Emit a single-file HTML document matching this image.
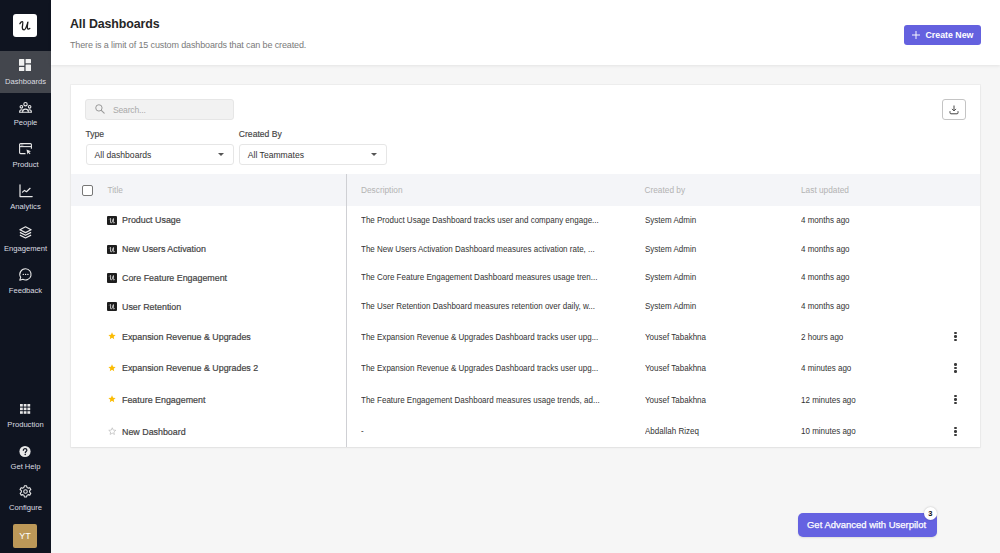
<!DOCTYPE html>
<html><head><meta charset="utf-8">
<style>
*{box-sizing:border-box;margin:0;padding:0}
html,body{width:1000px;height:553px;overflow:hidden;background:#f6f6f6;font-family:"Liberation Sans",sans-serif;color:#333}
.t{position:absolute;white-space:nowrap;line-height:1}
#side{position:absolute;left:0;top:0;width:51px;height:553px;background:#0f1420}
#logo{position:absolute;left:13.3px;top:13.9px;width:23.6px;height:23px;background:#fff;border-radius:3px}
.nav{position:absolute;left:0;width:51px;height:42px;color:#dcdde0;font-size:7.6px}
.nav.active{background:#43464d}
.nav svg{position:absolute;left:19px;top:8px;overflow:visible}
.nav .l{position:absolute;left:0;width:51px;text-align:center;top:26px;white-space:nowrap;line-height:1}
#header{position:absolute;left:51px;top:0;width:949px;height:65px;background:#fff;box-shadow:0 1px 3px rgba(0,0,0,.08)}
#title{left:70px;top:18px;font-size:12.4px;font-weight:bold;color:#262626;letter-spacing:-0.1px}
#sub{left:70px;top:40.5px;font-size:9px;color:#7a7a7a;letter-spacing:-0.13px}
#create{position:absolute;left:904px;top:25px;width:77px;height:20px;background:#6461df;border-radius:3px}
#create .t{left:21.5px;top:6px;font-size:8.8px;font-weight:bold;color:#fff}
#card{position:absolute;left:71px;top:85px;width:909px;height:362px;background:#fff;box-shadow:0 0 0 1px rgba(0,0,0,.03),0 1px 2px rgba(0,0,0,.06)}
#search{position:absolute;left:85px;top:99px;width:149px;height:21px;background:#f2f2f2;border:1px solid #e6e6e6;border-radius:3px}
.lbl{font-size:8.6px;color:#444;-webkit-text-stroke:0.15px #444}
.dd{position:absolute;top:143.5px;width:148px;height:21px;background:#fff;border:1px solid #e6e6e6;border-radius:3px}
.dd .t{left:8px;top:6px;font-size:8.6px;color:#333}
.dd .arr{position:absolute;right:9px;top:8px;width:0;height:0;border-left:3px solid transparent;border-right:3px solid transparent;border-top:3.5px solid #555}
#dl{position:absolute;left:942px;top:99px;width:24px;height:21px;border:1px solid #c4c4c4;border-radius:3px;background:#fff}
#thead{position:absolute;left:71px;top:174px;width:909px;height:32px;background:#f4f5f8}
#vline{position:absolute;left:346px;top:174px;width:1px;height:273px;background:#cfd0d4}
#chk{position:absolute;left:82px;top:185px;width:11px;height:11px;border:1.3px solid #777;border-radius:2px;background:#fff}
.th{font-size:8.3px;color:#b3b3b3;top:186px}
.ti{font-size:8.9px;color:#444;left:122px;-webkit-text-stroke:0.2px #444}
.de{font-size:9px;color:#333;left:361px;transform:scaleX(.89);transform-origin:0 0}
.cb{font-size:9px;color:#333;left:644.5px;transform:scaleX(.89);transform-origin:0 0}
.lu{font-size:9px;color:#333;left:801px;transform:scaleX(.89);transform-origin:0 0}
.ic{position:absolute;left:107px;width:10px;height:9.5px;background:#1e1e1e;border-radius:1px}
.kb{position:absolute;left:954.1px;width:2.6px;height:10px}
.kb i{position:absolute;left:0;width:2.6px;height:2.6px;border-radius:50%;background:#3a3a3a}
#adv{position:absolute;left:798px;top:513px;width:139px;height:24px;background:#6562e1;border-radius:5px;box-shadow:0 1px 2px rgba(0,0,0,.1)}
#adv .t{left:9.3px;top:7.4px;font-size:9.9px;color:#fff;transform:scaleX(.96);transform-origin:0 0;-webkit-text-stroke:0.25px #fff}
#badge{position:absolute;left:923.5px;top:506.5px;width:13.5px;height:13.5px;border-radius:50%;background:#fff;box-shadow:0 0 2px rgba(0,0,0,.25)}
#badge .t{left:0;width:13.5px;text-align:center;top:3px;font-size:7.5px;font-weight:bold;color:#111}
#yt{position:absolute;left:13px;top:524px;width:24px;height:24px;background:#bc9858;border-radius:2px}
#yt .t{left:0;width:24px;text-align:center;top:7.6px;font-size:9px;color:#fff}
</style></head><body>
<div id="side">
  <div id="logo"><svg width="24" height="24" viewBox="0 0 24 24" style="position:absolute;left:0;top:0"><path d="M6.9 9.7C7.6 8.5 9.1 7.5 9.7 7.8C10.3 8.2 9.2 12.4 9.3 13.9C9.4 15.3 10.2 15.9 11.1 15.9C12.6 15.8 14.1 10.6 14.9 8.2C14.6 10 14.1 13.2 14.4 14.3C14.7 15.3 15.9 15.2 16.8 14.5" fill="none" stroke="#1b1b1b" stroke-width="1.3" stroke-linecap="round" stroke-linejoin="round"/></svg></div>
  <div class="nav active" style="top:51px"><svg width="12" height="12" viewBox="0 0 12 12" style="top:8px"><rect x="0" y="0" width="5.3" height="6.8" rx=".6" fill="#f0f0f0"/><rect x="6.6" y="0" width="5.4" height="4.3" rx=".6" fill="#f0f0f0"/><rect x="0" y="8" width="5.3" height="4" rx=".6" fill="#f0f0f0"/><rect x="6.6" y="5.5" width="5.4" height="6.5" rx=".6" fill="#f0f0f0"/></svg><div class="l" style="top:27px">Dashboards</div></div>
  <div class="nav" style="top:93px"><svg width="13" height="11" viewBox="0 0 13 11" style="top:9px"><g fill="none" stroke="#e8e8e8" stroke-width="1.1"><circle cx="6.5" cy="2.2" r="1.7"/><circle cx="2.4" cy="4.8" r="1.3"/><circle cx="10.6" cy="4.8" r="1.3"/><path d="M3.6 10.3c0-1.8 1.3-3.2 2.9-3.2s2.9 1.4 2.9 3.2z"/><path d="M3.6 10.3H.6c0-1.5.8-2.6 1.8-2.6.6 0 1 .2 1.4.6M9.4 10.3h3c0-1.5-.8-2.6-1.8-2.6-.6 0-1 .2-1.4.6"/></g></svg><div class="l">People</div></div>
  <div class="nav" style="top:135px"><svg width="13" height="12" viewBox="0 0 13 12" style="top:8px"><g fill="none" stroke="#e8e8e8" stroke-width="1.1"><path d="M6.5 10.6H1.6a1 1 0 0 1-1-1V1.6a1 1 0 0 1 1-1h9.8a1 1 0 0 1 1 1v4.2"/><path d="M.6 3.6h11.8"/></g><path d="M7.5 6.6l4.5 1.6-1.9.8 1.4 1.5-.8.7-1.4-1.5-.8 1.9z" fill="#e8e8e8"/><circle cx="2.3" cy="2.1" r=".5" fill="#e8e8e8"/><circle cx="3.8" cy="2.1" r=".5" fill="#e8e8e8"/></svg><div class="l">Product</div></div>
  <div class="nav" style="top:177px"><svg width="14" height="14" viewBox="0 0 14 14" style="top:6.5px;left:18.5px"><g fill="none" stroke="#e8e8e8" stroke-width="1.2" stroke-linecap="round" stroke-linejoin="round"><path d="M1 .8V12.6h12.2"/><path d="M3.5 8.1l2-1.7 2 1.3 3.6-3.4"/></g></svg><div class="l">Analytics</div></div>
  <div class="nav" style="top:219px"><svg width="13" height="13" viewBox="0 0 13 13" style="top:6.5px"><g fill="none" stroke="#e8e8e8" stroke-width="1.2" stroke-linejoin="round"><path d="M6.5.8l5.6 2.9-5.6 2.9L.9 3.7z"/><path d="M.9 6.4l5.6 2.9 5.6-2.9M.9 9.1l5.6 2.9 5.6-2.9"/></g></svg><div class="l">Engagement</div></div>
  <div class="nav" style="top:261px"><svg width="13" height="13" viewBox="0 0 13 13" style="top:6.5px"><path d="M6.6.8a5.6 5.6 0 1 1-2.8 10.5L.8 12.2l.9-2.8A5.6 5.6 0 0 1 6.6.8z" fill="none" stroke="#e8e8e8" stroke-width="1.1" stroke-linejoin="round"/><circle cx="4.3" cy="6.4" r=".7" fill="#e8e8e8"/><circle cx="6.6" cy="6.4" r=".7" fill="#e8e8e8"/><circle cx="8.9" cy="6.4" r=".7" fill="#e8e8e8"/></svg><div class="l">Feedback</div></div>
  <div class="nav" style="top:395px"><svg width="11" height="10" viewBox="0 0 11 10" style="top:9px;left:20px"><g fill="#e8e8e8"><rect x="0" y="0" width="2.8" height="2.6"/><rect x="3.7" y="0" width="2.8" height="2.6"/><rect x="7.4" y="0" width="2.8" height="2.6"/><rect x="0" y="3.6" width="2.8" height="2.6"/><rect x="3.7" y="3.6" width="2.8" height="2.6"/><rect x="7.4" y="3.6" width="2.8" height="2.6"/><rect x="0" y="7.2" width="2.8" height="2.6"/><rect x="3.7" y="7.2" width="2.8" height="2.6"/><rect x="7.4" y="7.2" width="2.8" height="2.6"/></g></svg><div class="l">Production</div></div>
  <div class="nav" style="top:437px"><svg width="12" height="12" viewBox="0 0 12 12" style="top:9px"><circle cx="6" cy="5.5" r="5.6" fill="#e8e8e8"/><path d="M4.3 4.3c0-1 .8-1.7 1.8-1.7s1.8.7 1.8 1.6c0 1.2-1.6 1.3-1.6 2.5" fill="none" stroke="#0f1420" stroke-width="1.2" stroke-linecap="round"/><circle cx="6.2" cy="8.5" r=".75" fill="#0f1420"/></svg><div class="l">Get Help</div></div>
  <div class="nav" style="top:479px"><svg width="13" height="13" viewBox="0 0 24 24" style="top:6px"><g fill="none" stroke="#e8e8e8" stroke-width="2" stroke-linejoin="round"><path d="M10 1.5h4l.7 3 2.2 1.3 3-.9 2 3.4-2.3 2.2v2.6l2.3 2.2-2 3.4-3-.9-2.2 1.3-.7 3h-4l-.7-3-2.2-1.3-3 .9-2-3.4 2.3-2.2v-2.6L1.9 8.3l2-3.4 3 .9 2.2-1.3z"/><circle cx="12" cy="12" r="3.3"/></g></svg><div class="l" style="top:25.3px">Configure</div></div>
  <div id="yt"><div class="t">YT</div></div>
</div>
<div id="header"></div>
<div id="title" class="t">All Dashboards</div>
<div id="sub" class="t">There is a limit of 15 custom dashboards that can be created.</div>
<div id="create"><svg width="8" height="8" viewBox="0 0 8 8" style="position:absolute;left:8px;top:6px"><path d="M4 0v8M0 4h8" stroke="#fff" stroke-width=".95"/></svg><div class="t">Create New</div></div>
<div id="card"></div>
<div id="search"><svg width="10" height="10" viewBox="0 0 11 11" style="position:absolute;left:9.2px;top:4.4px"><circle cx="4.3" cy="4.3" r="3.5" fill="none" stroke="#999" stroke-width="1.1"/><path d="M6.9 6.9l3.2 3.2" stroke="#999" stroke-width="1.2" stroke-linecap="round"/></svg><div class="t" style="left:27px;top:6.3px;font-size:8.6px;letter-spacing:-0.2px;color:#a9a9a9">Search...</div></div>
<div class="t lbl" style="left:85.5px;top:130px">Type</div>
<div class="t lbl" style="left:238.8px;top:130px">Created By</div>
<div class="dd" style="left:85.5px"><div class="t">All dashboards</div><div class="arr"></div></div>
<div class="dd" style="left:238.8px"><div class="t">All Teammates</div><div class="arr"></div></div>
<div id="dl"><svg width="10" height="10" viewBox="0 0 10 10" style="position:absolute;left:6px;top:5px"><path d="M5 .5v5.4M3 3.9l2 2 2-2" fill="none" stroke="#444" stroke-width="1"/><path d="M1 6.2v1.6a1 1 0 0 0 1 1h6a1 1 0 0 0 1-1V6.2" fill="none" stroke="#444" stroke-width="1"/></svg></div>
<div id="thead"></div>
<div id="vline"></div>
<div id="chk"></div>
<div class="t th" style="left:107.5px">Title</div>
<div class="t th" style="left:361px">Description</div>
<div class="t th" style="left:644.5px">Created by</div>
<div class="t th" style="left:801px">Last updated</div>
<div id="rows">
<div class="ic" style="top:215.60px"><svg width="10" height="9.5" viewBox="0 0 10 10" style="position:absolute;left:0;top:0"><path d="M2.4 3.2C2.9 2.5 3.6 2.4 3.6 3L3.4 6.3C3.4 7.6 4.6 7.8 5.5 5.6L6.5 2.7L6.3 6.6C6.3 7.4 7 7.5 7.6 7" fill="none" stroke="#e8e8e8" stroke-width=".85" stroke-linecap="round" stroke-linejoin="round"/></svg></div>
<div class="t ti" style="top:216.37px">Product Usage</div>
<div class="t de" style="top:215.88px">The Product Usage Dashboard tracks user and company engage...</div>
<div class="t cb" style="top:215.88px">System Admin</div>
<div class="t lu" style="top:215.88px">4 months ago</div>
<div class="ic" style="top:244.50px"><svg width="10" height="9.5" viewBox="0 0 10 10" style="position:absolute;left:0;top:0"><path d="M2.4 3.2C2.9 2.5 3.6 2.4 3.6 3L3.4 6.3C3.4 7.6 4.6 7.8 5.5 5.6L6.5 2.7L6.3 6.6C6.3 7.4 7 7.5 7.6 7" fill="none" stroke="#e8e8e8" stroke-width=".85" stroke-linecap="round" stroke-linejoin="round"/></svg></div>
<div class="t ti" style="top:245.27px">New Users Activation</div>
<div class="t de" style="top:244.78px">The New Users Activation Dashboard measures activation rate, ...</div>
<div class="t cb" style="top:244.78px">System Admin</div>
<div class="t lu" style="top:244.78px">4 months ago</div>
<div class="ic" style="top:273.20px"><svg width="10" height="9.5" viewBox="0 0 10 10" style="position:absolute;left:0;top:0"><path d="M2.4 3.2C2.9 2.5 3.6 2.4 3.6 3L3.4 6.3C3.4 7.6 4.6 7.8 5.5 5.6L6.5 2.7L6.3 6.6C6.3 7.4 7 7.5 7.6 7" fill="none" stroke="#e8e8e8" stroke-width=".85" stroke-linecap="round" stroke-linejoin="round"/></svg></div>
<div class="t ti" style="top:273.97px">Core Feature Engagement</div>
<div class="t de" style="top:273.48px">The Core Feature Engagement Dashboard measures usage tren...</div>
<div class="t cb" style="top:273.48px">System Admin</div>
<div class="t lu" style="top:273.48px">4 months ago</div>
<div class="ic" style="top:301.90px"><svg width="10" height="9.5" viewBox="0 0 10 10" style="position:absolute;left:0;top:0"><path d="M2.4 3.2C2.9 2.5 3.6 2.4 3.6 3L3.4 6.3C3.4 7.6 4.6 7.8 5.5 5.6L6.5 2.7L6.3 6.6C6.3 7.4 7 7.5 7.6 7" fill="none" stroke="#e8e8e8" stroke-width=".85" stroke-linecap="round" stroke-linejoin="round"/></svg></div>
<div class="t ti" style="top:302.67px">User Retention</div>
<div class="t de" style="top:302.18px">The User Retention Dashboard measures retention over daily, w...</div>
<div class="t cb" style="top:302.18px">System Admin</div>
<div class="t lu" style="top:302.18px">4 months ago</div>
<svg width="8" height="8" viewBox="0 0 24 24" style="position:absolute;left:108px;top:332.40px"><path d="M12 1l3.2 7 7.6.8-5.7 5.1 1.6 7.5L12 17.6l-6.7 3.8 1.6-7.5L1.2 8.8l7.6-.8z" fill="#fbbc04"/></svg>
<div class="t ti" style="top:333.07px">Expansion Revenue &amp; Upgrades</div>
<div class="t de" style="top:332.58px">The Expansion Revenue &amp; Upgrades Dashboard tracks user upg...</div>
<div class="t cb" style="top:332.58px">Yousef Tabakhna</div>
<div class="t lu" style="top:332.58px">2 hours ago</div>
<div class="kb" style="top:331.70px"><i style="top:0"></i><i style="top:3.6px"></i><i style="top:7.2px"></i></div>
<svg width="8" height="8" viewBox="0 0 24 24" style="position:absolute;left:108px;top:363.80px"><path d="M12 1l3.2 7 7.6.8-5.7 5.1 1.6 7.5L12 17.6l-6.7 3.8 1.6-7.5L1.2 8.8l7.6-.8z" fill="#fbbc04"/></svg>
<div class="t ti" style="top:364.47px">Expansion Revenue &amp; Upgrades 2</div>
<div class="t de" style="top:363.98px">The Expansion Revenue &amp; Upgrades Dashboard tracks user upg...</div>
<div class="t cb" style="top:363.98px">Yousef Tabakhna</div>
<div class="t lu" style="top:363.98px">4 minutes ago</div>
<div class="kb" style="top:363.10px"><i style="top:0"></i><i style="top:3.6px"></i><i style="top:7.2px"></i></div>
<svg width="8" height="8" viewBox="0 0 24 24" style="position:absolute;left:108px;top:395.40px"><path d="M12 1l3.2 7 7.6.8-5.7 5.1 1.6 7.5L12 17.6l-6.7 3.8 1.6-7.5L1.2 8.8l7.6-.8z" fill="#fbbc04"/></svg>
<div class="t ti" style="top:396.07px">Feature Engagement</div>
<div class="t de" style="top:395.58px">The Feature Engagement Dashboard measures usage trends, ad...</div>
<div class="t cb" style="top:395.58px">Yousef Tabakhna</div>
<div class="t lu" style="top:395.58px">12 minutes ago</div>
<div class="kb" style="top:394.70px"><i style="top:0"></i><i style="top:3.6px"></i><i style="top:7.2px"></i></div>
<svg width="8.5" height="8.5" viewBox="0 0 24 24" style="position:absolute;left:107.7px;top:427.20px"><path d="M12 2.2l2.9 6.5 7 .7-5.3 4.7 1.5 6.9L12 17.5l-6.1 3.5 1.5-6.9L2.1 9.4l7-.7z" fill="none" stroke="#b0b0b0" stroke-width="1.7" stroke-linejoin="round"/></svg>
<div class="t ti" style="top:427.87px">New Dashboard</div>
<div class="t de" style="top:427.38px">-</div>
<div class="t cb" style="top:427.38px">Abdallah Rizeq</div>
<div class="t lu" style="top:427.38px">10 minutes ago</div>
<div class="kb" style="top:426.50px"><i style="top:0"></i><i style="top:3.6px"></i><i style="top:7.2px"></i></div>
</div><!--/rows-->
<div id="adv"><div class="t">Get Advanced with Userpilot</div></div>
<div id="badge"><div class="t">3</div></div>
</body></html>
